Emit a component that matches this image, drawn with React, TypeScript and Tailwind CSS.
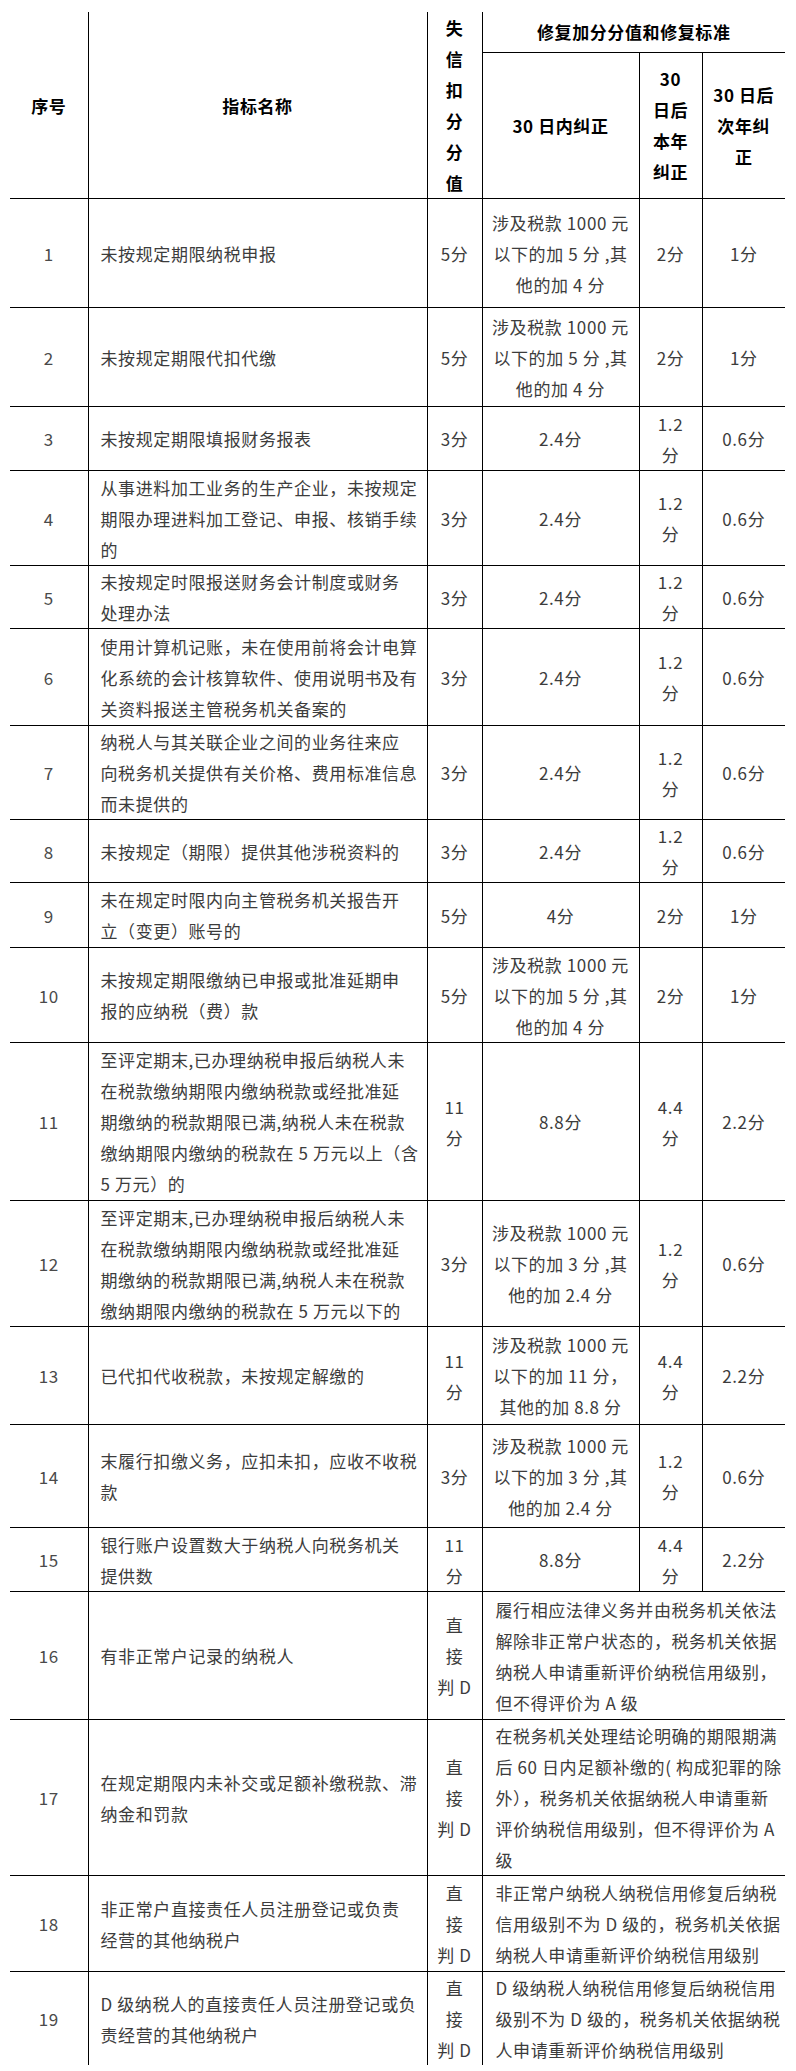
import React from "react";

type Row = {
  no: string;
  h: string;
  name: string[];
  deduct: string[];
  in30?: string[];
  thisYear?: string[];
  nextYear?: string[];
  note?: string[];
};

const small1000 = (n: string, rest: string) => ["涉及税款 1000 元", `以下的加 ${n} 分 ,其`, `他的加 ${rest} 分`];
const direct = ["直", "接", "判 D"];

const rows: Row[] = [
  { no: "1", h: "h-[109px]", name: ["未按规定期限纳税申报"], deduct: ["5分"], in30: small1000("5", "4"), thisYear: ["2分"], nextYear: ["1分"] },
  { no: "2", h: "h-[99px]", name: ["未按规定期限代扣代缴"], deduct: ["5分"], in30: small1000("5", "4"), thisYear: ["2分"], nextYear: ["1分"] },
  { no: "3", h: "h-[64px]", name: ["未按规定期限填报财务报表"], deduct: ["3分"], in30: ["2.4分"], thisYear: ["1.2", "分"], nextYear: ["0.6分"] },
  {
    no: "4",
    h: "h-[95px]",
    name: ["从事进料加工业务的生产企业，未按规定", "期限办理进料加工登记、申报、核销手续", "的"],
    deduct: ["3分"],
    in30: ["2.4分"],
    thisYear: ["1.2", "分"],
    nextYear: ["0.6分"],
  },
  { no: "5", h: "h-[63px]", name: ["未按规定时限报送财务会计制度或财务", "处理办法"], deduct: ["3分"], in30: ["2.4分"], thisYear: ["1.2", "分"], nextYear: ["0.6分"] },
  {
    no: "6",
    h: "h-[97px]",
    name: ["使用计算机记账，未在使用前将会计电算", "化系统的会计核算软件、使用说明书及有", "关资料报送主管税务机关备案的"],
    deduct: ["3分"],
    in30: ["2.4分"],
    thisYear: ["1.2", "分"],
    nextYear: ["0.6分"],
  },
  {
    no: "7",
    h: "h-[93px]",
    name: ["纳税人与其关联企业之间的业务往来应", "向税务机关提供有关价格、费用标准信息", "而未提供的"],
    deduct: ["3分"],
    in30: ["2.4分"],
    thisYear: ["1.2", "分"],
    nextYear: ["0.6分"],
  },
  { no: "8", h: "h-[61px]", name: ["未按规定（期限）提供其他涉税资料的"], deduct: ["3分"], in30: ["2.4分"], thisYear: ["1.2", "分"], nextYear: ["0.6分"] },
  { no: "9", h: "h-[65px]", name: ["未在规定时限内向主管税务机关报告开", "立（变更）账号的"], deduct: ["5分"], in30: ["4分"], thisYear: ["2分"], nextYear: ["1分"] },
  {
    no: "10",
    h: "h-[95px]",
    name: ["未按规定期限缴纳已申报或批准延期申", "报的应纳税（费）款"],
    deduct: ["5分"],
    in30: small1000("5", "4"),
    thisYear: ["2分"],
    nextYear: ["1分"],
  },
  {
    no: "11",
    h: "h-[158px]",
    name: [
      "至评定期末,已办理纳税申报后纳税人未",
      "在税款缴纳期限内缴纳税款或经批准延",
      "期缴纳的税款期限已满,纳税人未在税款",
      "缴纳期限内缴纳的税款在 5 万元以上（含",
      "5 万元）的",
    ],
    deduct: ["11", "分"],
    in30: ["8.8分"],
    thisYear: ["4.4", "分"],
    nextYear: ["2.2分"],
  },
  {
    no: "12",
    h: "h-[126px]",
    name: [
      "至评定期末,已办理纳税申报后纳税人未",
      "在税款缴纳期限内缴纳税款或经批准延",
      "期缴纳的税款期限已满,纳税人未在税款",
      "缴纳期限内缴纳的税款在 5 万元以下的",
    ],
    deduct: ["3分"],
    in30: small1000("3", "2.4"),
    thisYear: ["1.2", "分"],
    nextYear: ["0.6分"],
  },
  {
    no: "13",
    h: "h-[98px]",
    name: ["已代扣代收税款，未按规定解缴的"],
    deduct: ["11", "分"],
    in30: ["涉及税款 1000 元", "以下的加 11 分，", "其他的加 8.8 分"],
    thisYear: ["4.4", "分"],
    nextYear: ["2.2分"],
  },
  {
    no: "14",
    h: "h-[103px]",
    name: ["末履行扣缴义务，应扣未扣，应收不收税", "款"],
    deduct: ["3分"],
    in30: small1000("3", "2.4"),
    thisYear: ["1.2", "分"],
    nextYear: ["0.6分"],
  },
  { no: "15", h: "h-[64px]", name: ["银行账户设置数大于纳税人向税务机关", "提供数"], deduct: ["11", "分"], in30: ["8.8分"], thisYear: ["4.4", "分"], nextYear: ["2.2分"] },
  {
    no: "16",
    h: "h-[128px]",
    name: ["有非正常户记录的纳税人"],
    deduct: direct,
    note: ["履行相应法律义务并由税务机关依法", "解除非正常户状态的，税务机关依据", "纳税人申请重新评价纳税信用级别，", "但不得评价为 A 级"],
  },
  {
    no: "17",
    h: "h-[156px]",
    name: ["在规定期限内未补交或足额补缴税款、滞", "纳金和罚款"],
    deduct: direct,
    note: ["在税务机关处理结论明确的期限期满", "后 60 日内足额补缴的( 构成犯罪的除", "外），税务机关依据纳税人申请重新", "评价纳税信用级别，但不得评价为 A", "级"],
  },
  {
    no: "18",
    h: "h-[96px]",
    name: ["非正常户直接责任人员注册登记或负责", "经营的其他纳税户"],
    deduct: direct,
    note: ["非正常户纳税人纳税信用修复后纳税", "信用级别不为 D 级的，税务机关依据", "纳税人申请重新评价纳税信用级别"],
  },
  {
    no: "19",
    h: "h-[92px]",
    name: ["D 级纳税人的直接责任人员注册登记或负", "责经营的其他纳税户"],
    deduct: direct,
    note: ["D 级纳税人纳税信用修复后纳税信用", "级别不为 D 级的，税务机关依据纳税", "人申请重新评价纳税信用级别"],
  },
];

const Lines = ({ lines }: { lines: string[] }) => (
  <>
    {lines.map((l, i) => (
      <div key={i} className="whitespace-nowrap">
        {l}
      </div>
    ))}
  </>
);

const th = "border-black border-r border-b p-0 align-middle text-center font-bold text-black";
const td = "border-black border-r p-0 align-middle";

export default function App() {
  return (
    <div className="min-h-screen bg-white pt-[12px] pl-[10px] font-['Noto_Sans_CJK_SC',sans-serif] text-[17px] leading-[31px] tracking-[0.6px]">
      <table className="table-fixed border-collapse w-[775px]">
        <colgroup>
          <col className="w-[78px]" />
          <col className="w-[339px]" />
          <col className="w-[55px]" />
          <col className="w-[157px]" />
          <col className="w-[63px]" />
          <col className="w-[83px]" />
        </colgroup>
        <thead>
          <tr className="h-[40px]">
            <th rowSpan={2} className={th}>序号</th>
            <th rowSpan={2} className={th}>指标名称</th>
            <th rowSpan={2} className={th}>
              <Lines lines={["失", "信", "扣", "分", "分", "值"]} />
            </th>
            <th colSpan={3} className="border-black border-b p-0 align-middle text-center font-bold text-black">
              修复加分分值和修复标准
            </th>
          </tr>
          <tr className="h-[146px]">
            <th className={th}>30 日内纠正</th>
            <th className={th}>
              <Lines lines={["30", "日后", "本年", "纠正"]} />
            </th>
            <th className="border-black border-b p-0 align-middle text-center font-bold text-black">
              <Lines lines={["30 日后", "次年纠", "正"]} />
            </th>
          </tr>
        </thead>
        <tbody className="text-[#3c3c3c]">
          {rows.map((r, idx) => {
            const last = idx === rows.length - 1;
            const b = last ? "" : " border-b";
            return (
              <tr key={r.no} className={r.h}>
                <td className={`${td}${b} text-center text-[#4a4a4a]`}>{r.no}</td>
                <td className={`${td}${b} pl-[12px] text-left`}>
                  <Lines lines={r.name} />
                </td>
                <td className={`${td}${b} text-center`}>
                  <Lines lines={r.deduct} />
                </td>
                {r.note ? (
                  <td colSpan={3} className={`border-black p-0 align-middle pl-[13px] text-left${b}`}>
                    <Lines lines={r.note} />
                  </td>
                ) : (
                  <>
                    <td className={`${td}${b} text-center`}>
                      <Lines lines={r.in30 ?? []} />
                    </td>
                    <td className={`${td}${b} text-center`}>
                      <Lines lines={r.thisYear ?? []} />
                    </td>
                    <td className={`border-black p-0 align-middle text-center${b}`}>
                      <Lines lines={r.nextYear ?? []} />
                    </td>
                  </>
                )}
              </tr>
            );
          })}
        </tbody>
      </table>
    </div>
  );
}
